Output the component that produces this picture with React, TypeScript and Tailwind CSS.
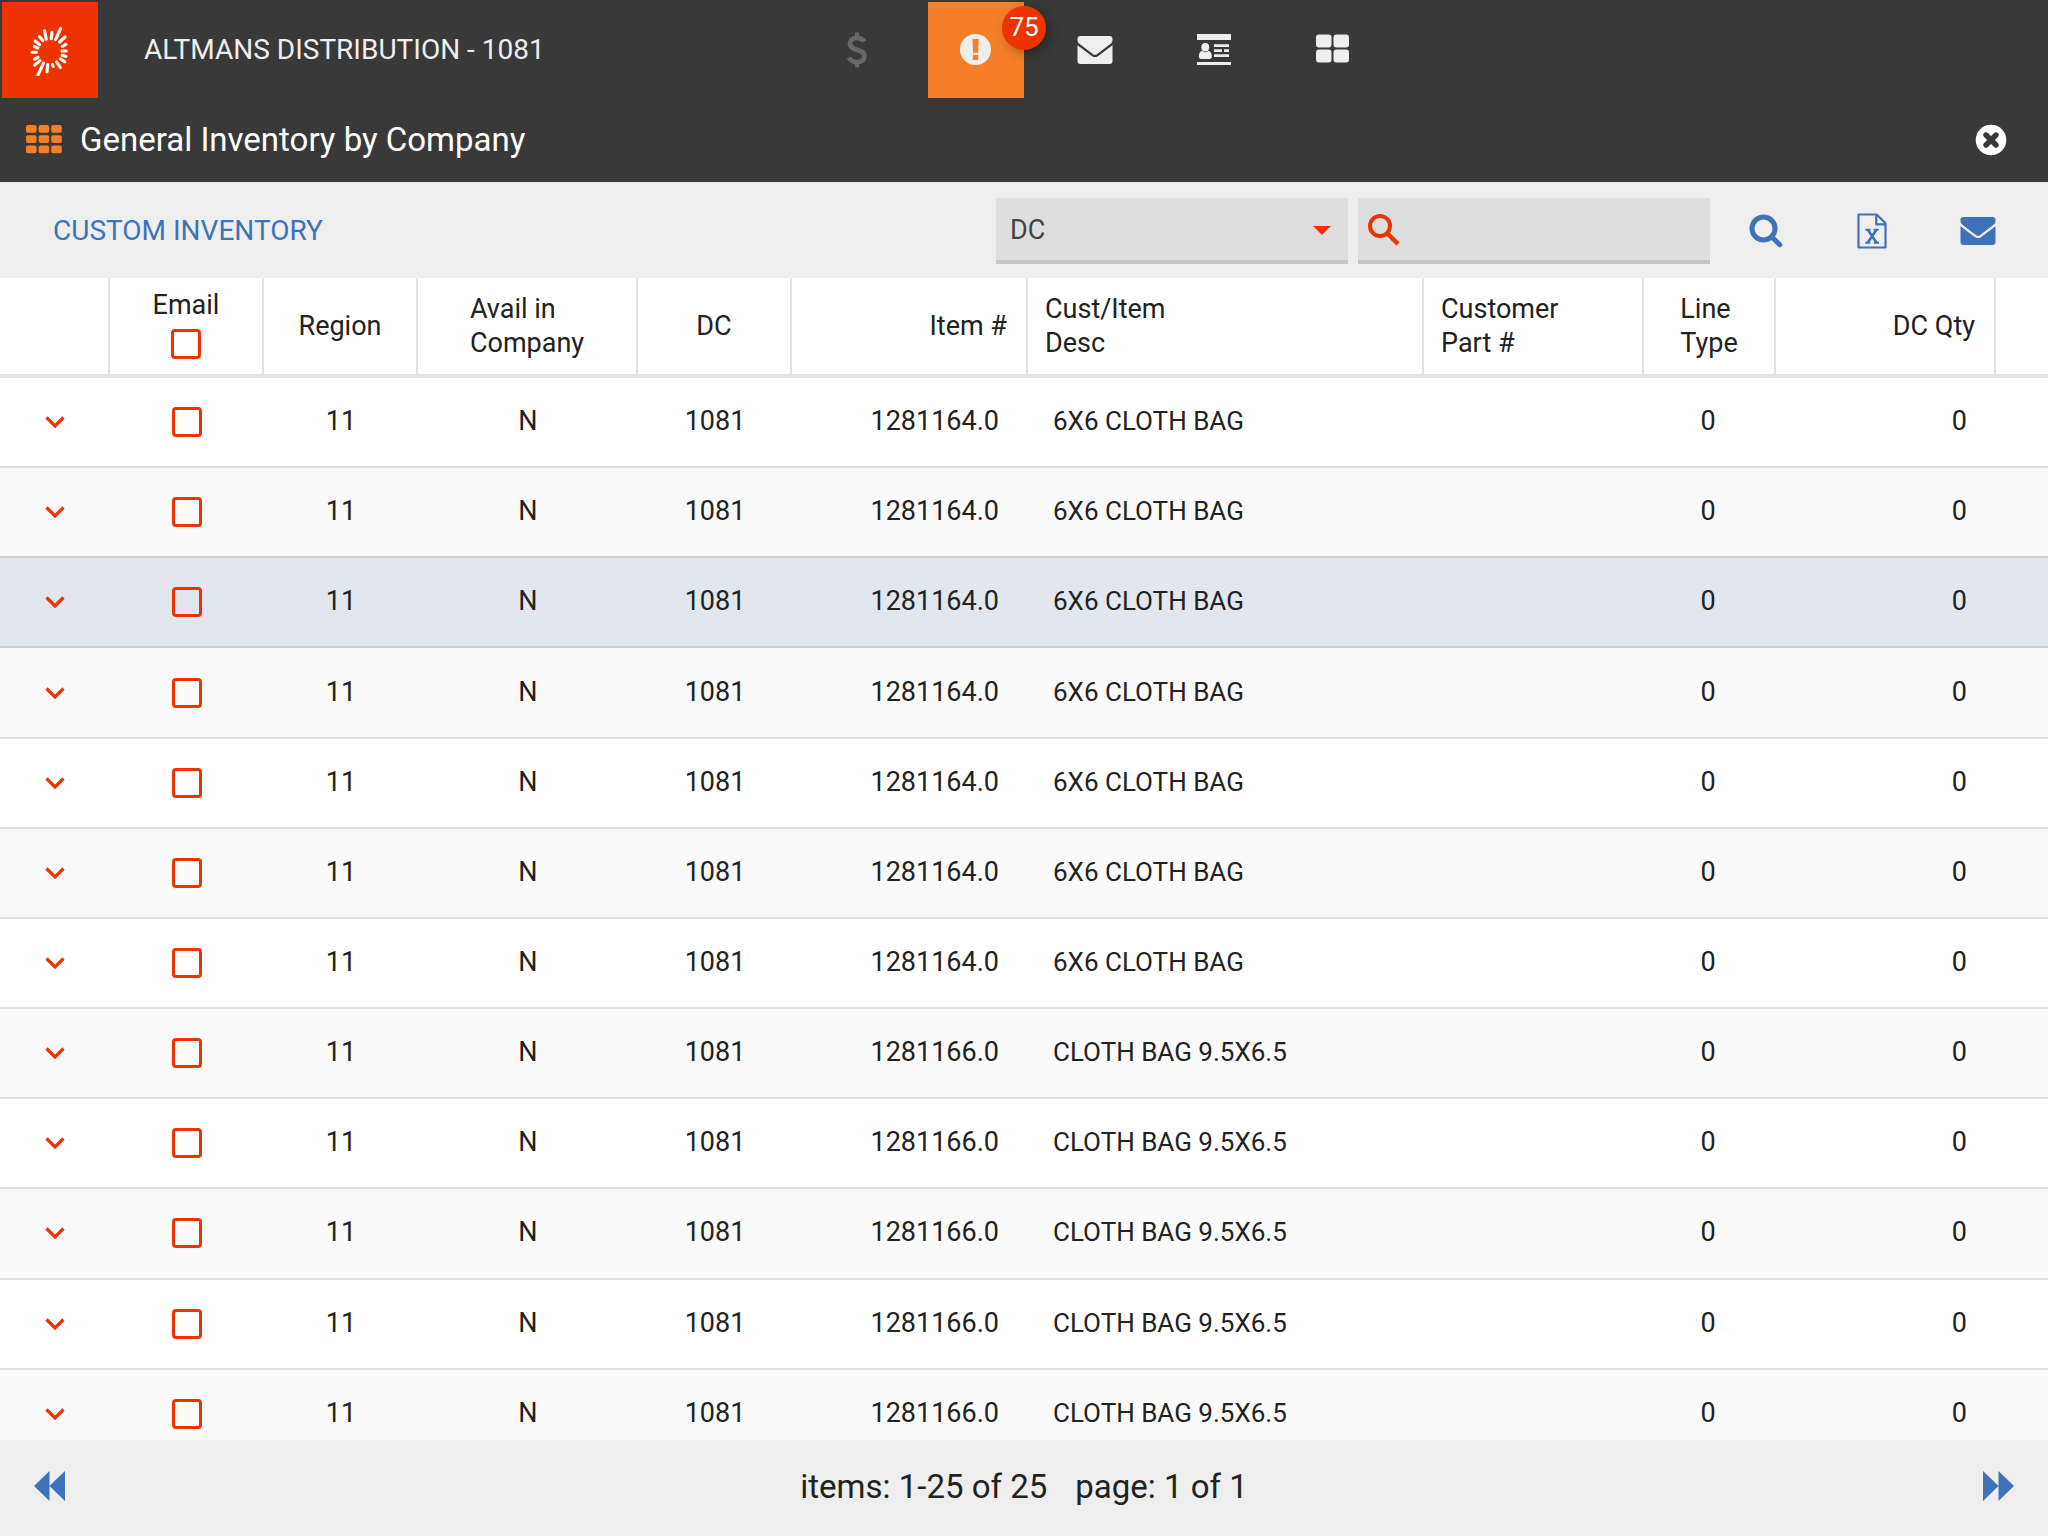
import React from "react";

type Row = { id: number; item: string; desc: string };

const rows: Row[] = Array.from({ length: 12 }, (_, i) =>
  i < 7
    ? { id: i, item: "1281164.0", desc: "6X6 CLOTH BAG" }
    : { id: i, item: "1281166.0", desc: "CLOTH BAG 9.5X6.5" },
);

const selectedRow = 2;

const rays = [
  [60.6, 28.6, 55.6, 39.5], [65, 37, 59.6, 42], [66, 44.4, 62.2, 46.5],
  [66.2, 51, 62, 51], [66, 56.4, 62.2, 55.2], [64.8, 61.8, 60.4, 59],
  [60.2, 67.4, 56.6, 62], [53.2, 66.5, 52.4, 64.6], [47, 71.8, 47.8, 64.6],
  [38, 74.8, 43.6, 63.2], [34.8, 65.2, 40, 60.6], [34.6, 59.2, 38, 57.4],
  [32, 52.3, 36.4, 52.3], [34.4, 46.4, 37.8, 48], [35.2, 41, 39.6, 44.6],
  [39.4, 36.6, 42.8, 40.6], [44.6, 30.8, 46.2, 39.2], [52, 32.2, 51.2, 38.8],
];

function Logo() {
  return (
    <svg width="52" height="52" viewBox="24 24 52 52" fill="none" stroke="#fff" strokeWidth="3.1" strokeLinecap="round">
      {rays.map(([x1, y1, x2, y2], i) => (
        <line key={i} x1={x1} y1={y1} x2={x2} y2={y2} />
      ))}
    </svg>
  );
}

function DollarIcon() {
  return (
    <svg width="20" height="36" viewBox="0 0 20 36" fill="none" stroke="#686868" strokeWidth="4.8">
      <path d="M10 0.5v5M10 30.5v5" strokeWidth="4" />
      <path d="M17.2 9.6C15.6 7 13.2 5.8 10 5.8c-4 0-7 2.200-7 5.800 0 8.200 14.300 4.400 14.300 12.400 0 4-3.100 6.200-7.300 6.200-3.600 0-6.500-1.600-8.100-4.600" />
    </svg>
  );
}

function AlertIcon() {
  return (
    <svg width="32" height="32" viewBox="0 0 32 32">
      <circle cx="15.500" cy="15.500" r="15.500" fill="#eee" />
      <path d="M12.500 5h6.200l-.6 13.800h-5zM12.800 20.900h5.400v5.200h-5.400z" fill="#f58029" />
    </svg>
  );
}

function MailIcon({ className }: { className: string }) {
  return (
    <svg width="36" height="30" viewBox="0 0 36 30" className={className} fill="currentColor">
      <path d="M3.500 1h29A3 3 0 0 1 35.500 4v1c0 1.800-.8 3-2.200 4.100L20.200 18.900c-1.600 1.200-2.800 1.200-4.400 0L2.700 9.100C1.300 8 .5 6.800.5 5V4a3 3 0 0 1 3-3z" />
      <path d="M.5 10.200 14.800 20.900c2.200 1.600 4.200 1.600 6.400 0L35.500 10.200V26a3 3 0 0 1-3 3h-29a3 3 0 0 1-3-3z" />
    </svg>
  );
}

function ContactIcon() {
  return (
    <svg width="34" height="32" viewBox="0 0 34 32" fill="#eee">
      <path d="M0 0h34v6H0zM0 28h34v3H0z" />
      <ellipse cx="8.300" cy="13.200" rx="3.900" ry="4.200" />
      <path d="M4.800 16.800c2 1.800 5 1.800 7 0 2 1 3 3 3 5.500 0 1.800-.8 2.700-2.300 2.700H4.100c-1.500 0-2.300-.9-2.300-2.700 0-2.500 1-4.500 3-5.500z" />
      <path d="M17 10.300h15v2.600H17zM17 15.300h8v2.600h-8zM27 15.300h5v2.600h-5zM17 20.300h15v2.600H17z" />
    </svg>
  );
}

function TilesIcon() {
  return (
    <svg width="34" height="32" viewBox="0 0 34 32" fill="#eee">
      <rect x="0" y="0.500" width="15.500" height="13" rx="3" />
      <rect x="17.500" y="0.500" width="15.500" height="13" rx="3" />
      <rect x="0" y="15.500" width="15.500" height="13" rx="3" />
      <rect x="17.500" y="15.500" width="15.500" height="13" rx="3" />
    </svg>
  );
}

function GridIcon() {
  return (
    <svg width="36" height="30" viewBox="0 0 36 30" fill="#f58029" className="shrink-0">
      {[0, 10.200, 20.400].map((y) =>
        [0, 12.600, 25.200].map((x) => <rect key={`${x}-${y}`} x={x} y={y} width="10.600" height="7.800" rx="2" />),
      )}
    </svg>
  );
}

function CloseIcon() {
  return (
    <svg width="32" height="32" viewBox="0 0 32 32">
      <circle cx="16" cy="16" r="15.300" fill="#fff" />
      <path d="m11 11 10 10M21 11 11 21" stroke="#393939" strokeWidth="5.400" strokeLinecap="round" />
    </svg>
  );
}

function SearchIcon() {
  return (
    <svg width="34" height="34" viewBox="0 0 34 34" fill="none" stroke="#3e73b9" strokeWidth="5">
      <circle cx="14.500" cy="14.500" r="11.500" />
      <path d="m23.500 23.500 7.300 7.300" strokeLinecap="round" />
    </svg>
  );
}

function SheetIcon() {
  return (
    <svg width="30" height="36" viewBox="0 0 30 36" fill="none" stroke="#3e73b9" strokeWidth="2.200">
      <path d="M1.500 1.500h18.200l8.800 8.700v24.300h-27zM19.200 1.500v9.800h9.300" strokeLinejoin="round" />
      <path d="m10.800 16.800 8.800 13M19.500 16.800l-8.900 13" strokeWidth="2.600" />
      <path d="M8.500 16.800h5M16.600 16.800h5M8.200 29.700h5M16.800 29.700h5.200" strokeWidth="2" />
    </svg>
  );
}

function Chevron() {
  return (
    <svg width="20" height="14" viewBox="0 0 20 14" fill="none" stroke="#ed3400" strokeWidth="3.200">
      <path d="m1.500 2.500 8.500 8.500 8.500-8.500" />
    </svg>
  );
}

function Checkbox({ label }: { label: string }) {
  return (
    <input
      type="checkbox"
      aria-label={label}
      className="block size-[30px] appearance-none rounded-[4px] border-3 border-[#ed3400] checked:bg-[#ed3400]"
    />
  );
}

const navButton = "flex size-24 items-center justify-center";
const headCell = "h-[100px] border-b-4 border-r-2 border-[#e3e3e3] p-0 font-normal";

export default function App() {
  return (
    <div className="flex h-screen flex-col overflow-hidden bg-white font-['Roboto',sans-serif] text-[27px] leading-[34px] text-[#222]">
      <header className="shrink-0 bg-[#393939]">
        <div className="flex pt-0.5 pl-0.5">
          <div className="flex w-[807px] shrink-0 items-center">
            <a href="#" aria-label="Home" className="flex size-24 items-center justify-center bg-[#ed3400]">
              <Logo />
            </a>
            <span className="ml-[46px] text-[28px] text-[#eee]">ALTMANS DISTRIBUTION - 1081</span>
          </div>
          <nav className="flex gap-[23px]" aria-label="Main">
            <button aria-label="Payments" className={navButton}><DollarIcon /></button>
            <button aria-label="Alerts" className="relative flex size-24 items-center justify-center bg-[#f58029]">
              <AlertIcon />
              <span className="absolute top-1 -right-[22px] flex size-11 items-center justify-center rounded-full bg-[#ed3400] pb-0.5 text-[26px] text-white shadow-[4px_4px_12px_rgba(0,0,0,0.3)]">
                75
              </span>
            </button>
            <button aria-label="Messages" className={navButton}><MailIcon className="text-[#eee]" /></button>
            <button aria-label="Contacts" className={navButton}><ContactIcon /></button>
            <button aria-label="Apps" className={navButton}><TilesIcon /></button>
          </nav>
        </div>
        <div className="flex h-[84px] items-center gap-[18px] pr-[41px] pl-[26px]">
          <GridIcon />
          <h1 className="flex-1 text-[33px] leading-[40px] text-white">General Inventory by Company</h1>
          <button aria-label="Close"><CloseIcon /></button>
        </div>
      </header>

      <div className="flex h-24 shrink-0 items-center bg-[#eee] pt-0.5 pr-[17px] pl-[53px]">
        <h2 className="flex-1 text-[28px] text-[#3e73b9]">CUSTOM INVENTORY</h2>
        <div className="relative w-[352px]">
          <select
            aria-label="Search field"
            className="block h-[66px] w-full appearance-none border-b-4 border-[#c6c6c6] bg-[#dedede] px-[14px] pt-0.5 text-[#444] outline-none"
          >
            <option>DC</option>
          </select>
          <svg width="18" height="10" viewBox="0 0 18 10" className="pointer-events-none absolute top-7 right-[17px]" fill="#ed3400">
            <path d="M0 0h18L9 9z" />
          </svg>
        </div>
        <div className="relative ml-2.5 w-[352px]">
          <svg width="34" height="34" viewBox="0 0 34 34" className="pointer-events-none absolute top-[15px] left-[9px]" fill="none" stroke="#ed3400" strokeWidth="4">
            <circle cx="13" cy="13" r="10" />
            <path d="m20.500 20.500 10.500 10.500" strokeWidth="4.500" />
          </svg>
          <input
            type="text"
            aria-label="Search"
            className="block h-[66px] w-full border-b-4 border-[#c6c6c6] bg-[#dedede] pr-3 pl-12 outline-none"
          />
        </div>
        <div className="ml-[3px] flex">
          <button aria-label="Search" className="flex h-16 w-[106px] items-center justify-center"><SearchIcon /></button>
          <button aria-label="Export to Excel" className="flex h-16 w-[106px] items-center justify-center"><SheetIcon /></button>
          <button aria-label="Email" className="flex h-16 w-[106px] items-center justify-center"><MailIcon className="text-[#3e73b9]" /></button>
        </div>
      </div>

      <main className="min-h-0 flex-1 overflow-hidden">
        <table className="h-[1182px] w-full table-fixed border-separate border-spacing-0">
          <colgroup>
            <col className="w-[110px]" />
            <col className="w-[154px]" />
            <col className="w-[154px]" />
            <col className="w-[220px]" />
            <col className="w-[154px]" />
            <col className="w-[236px]" />
            <col />
            <col className="w-[220px]" />
            <col className="w-[132px]" />
            <col className="w-[220px]" />
            <col className="w-[52px]" />
          </colgroup>
          <thead>
            <tr>
              <th className={headCell} />
              <th className={headCell}>
                <div className="flex flex-col items-center gap-[7px] pb-[5px]">
                  Email
                  <Checkbox label="Email all" />
                </div>
              </th>
              <th className={headCell}>Region</th>
              <th className={headCell}>
                <span className="inline-block text-left align-middle">Avail in<br />Company</span>
              </th>
              <th className={headCell}>DC</th>
              <th className={headCell}><div className="pr-[19px] text-right">Item #</div></th>
              <th className={headCell}><div className="pl-[17px] text-left">Cust/Item<br />Desc</div></th>
              <th className={headCell}><div className="pl-[17px] text-left">Customer<br />Part #</div></th>
              <th className={headCell}>
                <span className="inline-block text-left align-middle">Line<br />Type</span>
              </th>
              <th className={headCell}><div className="pr-[19px] text-right">DC Qty</div></th>
              <th className="h-[100px] border-b-4 border-[#e3e3e3] p-0" />
            </tr>
          </thead>
          <tbody>
            {rows.map((r) => (
              <tr
                key={r.id}
                className={
                  r.id === selectedRow
                    ? "bg-[#e1e6ef] *:border-[#cbcfd6]"
                    : r.id === selectedRow - 1
                      ? "bg-[#fafafa] *:border-[#cbcfd6]"
                      : r.id % 2
                        ? "bg-[#fafafa] *:border-[#e0e0e0]"
                        : "bg-white *:border-[#e0e0e0]"
                }
              >
                <td className="border-b-2 p-0">
                  <button aria-label="Expand row" className="mx-auto flex size-11 items-center justify-center"><Chevron /></button>
                </td>
                <td className="border-b-2 p-0">
                  <div className="flex justify-center"><Checkbox label="Email row" /></div>
                </td>
                <td className="border-b-2 p-0 pb-0.5 text-center">11</td>
                <td className="border-b-2 p-0 pb-0.5 text-center">N</td>
                <td className="border-b-2 p-0 pb-0.5 text-center">1081</td>
                <td className="border-b-2 p-0 pr-[29px] pb-0.5 text-right">{r.item}</td>
                <td className="border-b-2 p-0 pb-0.5 pl-[25px] text-[26px]">{r.desc}</td>
                <td className="border-b-2 p-0" />
                <td className="border-b-2 p-0 pr-1 pb-0.5 text-center">0</td>
                <td className="border-b-2 p-0 pr-[29px] pb-0.5 text-right">0</td>
                <td className="border-b-2 p-0" />
              </tr>
            ))}
          </tbody>
        </table>
      </main>

      <footer className="flex h-24 shrink-0 items-center justify-between bg-[#eee] px-[34px] text-[33px] leading-[40px]">
        <button aria-label="Previous page">
          <svg width="32" height="30" viewBox="0 0 32 30" fill="#3e73b9" className="mb-1"><path d="M15.500 0v30L0 15zM31 0v30L15.500 15z" /></svg>
        </button>
        <p className="flex gap-7 pb-0.5"><span>items: 1-25 of 25</span><span>page: 1 of 1</span></p>
        <button aria-label="Next page">
          <svg width="32" height="30" viewBox="0 0 32 30" fill="#3e73b9" className="mb-1"><path d="M1 0v30l15.500-15zM16.500 0v30L32 15z" /></svg>
        </button>
      </footer>
    </div>
  );
}
